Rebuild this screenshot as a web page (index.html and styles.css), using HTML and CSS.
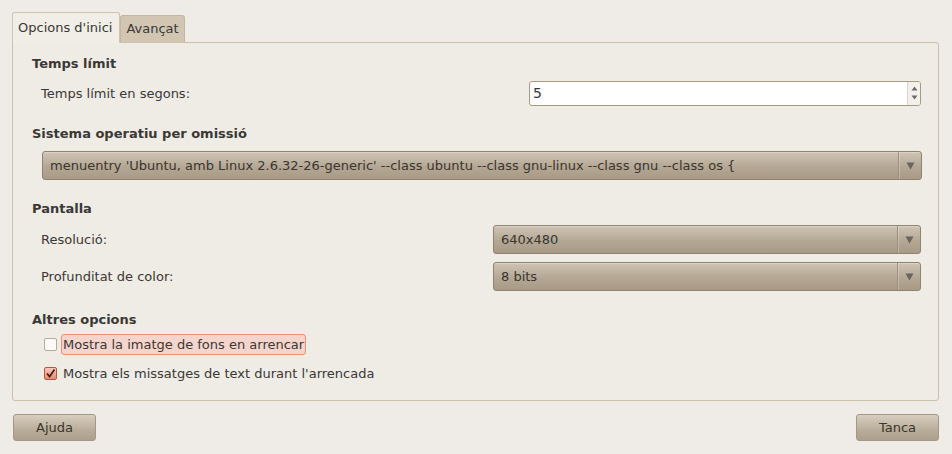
FILE: index.html
```html
<!DOCTYPE html>
<html lang="ca">
<head>
<meta charset="utf-8">
<link rel="stylesheet" href="styles.css">
</head>
<body>
<div class="dialog">
  <div class="tabs">
    <div class="tab active">Opcions d'inici</div>
    <div class="tab">Avançat</div>
  </div>
  <div class="panel">
    <div class="section s1">
      <div class="heading">Temps límit</div>
      <div class="row">
        <span class="label">Temps límit en segons:</span>
        <div class="spin">
          <span class="spin-value">5</span>
          <div class="spin-btns">
            <svg width="7" height="5" viewBox="0 0 7 5"><path d="M3.5 0.5 L6.5 4.5 L0.5 4.5Z" fill="#6f6a62"/></svg>
            <svg width="7" height="5" viewBox="0 0 7 5"><path d="M0.5 0.5 L6.5 0.5 L3.5 4.5Z" fill="#6f6a62"/></svg>
          </div>
        </div>
      </div>
    </div>
    <div class="section s2">
      <div class="heading">Sistema operatiu per omissió</div>
      <div class="combo wide">
        <span class="combo-text">menuentry 'Ubuntu, amb Linux 2.6.32-26-generic' --class ubuntu --class gnu-linux --class gnu --class os {</span>
        <span class="combo-arrow"><svg width="9" height="8" viewBox="0 0 9 8"><path d="M0.5 0.5 L8.5 0.5 L4.5 7.5Z" fill="#6a645b"/></svg></span>
      </div>
    </div>
    <div class="section s3">
      <div class="heading">Pantalla</div>
      <div class="row">
        <span class="label">Resolució:</span>
        <div class="combo half">
          <span class="combo-text">640x480</span>
          <span class="combo-arrow"><svg width="9" height="8" viewBox="0 0 9 8"><path d="M0.5 0.5 L8.5 0.5 L4.5 7.5Z" fill="#6a645b"/></svg></span>
        </div>
      </div>
      <div class="row">
        <span class="label">Profunditat de color:</span>
        <div class="combo half">
          <span class="combo-text">8 bits</span>
          <span class="combo-arrow"><svg width="9" height="8" viewBox="0 0 9 8"><path d="M0.5 0.5 L8.5 0.5 L4.5 7.5Z" fill="#6a645b"/></svg></span>
        </div>
      </div>
    </div>
    <div class="section s4">
      <div class="heading">Altres opcions</div>
      <div class="check">
        <span class="box"></span>
        <span class="check-label focus">Mostra la imatge de fons en arrencar</span>
      </div>
      <div class="check">
        <span class="box checked"><svg width="11" height="11" viewBox="0 0 11 11"><path d="M2 5.5 L4.6 8.5 L9.5 1.5" fill="none" stroke="#4a1a12" stroke-width="1.7"/></svg></span>
        <span class="check-label">Mostra els missatges de text durant l'arrencada</span>
      </div>
    </div>
  </div>
  <div class="buttons">
    <button class="btn">Ajuda</button>
    <button class="btn">Tanca</button>
  </div>
</div>
</body>
</html>
```
FILE: styles.css
```css
html, body {
  margin: 0;
  padding: 0;
  background: #efebe6;
}
body {
  font-family: "DejaVu Sans", sans-serif;
  font-size: 13px;
  color: #3a3835;
  width: 952px;
  height: 454px;
  overflow: hidden;
}
.dialog {
  padding: 12px 13px 0 12px;
}
.tabs {
  display: flex;
  align-items: flex-end;
  height: 30px;
  position: relative;
  z-index: 1;
}
.tab {
  box-sizing: border-box;
  height: 27px;
  padding: 0 5px;
  line-height: 26px;
  background: #d2c6b3;
  border: 1px solid #c4b7a1;
  border-bottom: none;
  border-radius: 3px 3px 0 0;
}
.tab.active {
  height: 31px;
  line-height: 30px;
  background: #f1ede7;
  border-color: #cfc3b0;
  margin-bottom: -1px;
  padding: 0 7px 0 5px;
}
.panel {
  box-sizing: border-box;
  height: 359px;
  border: 1px solid #cdbfa9;
  border-radius: 0 3px 3px 3px;
  background: #efebe5;
  padding: 12px 17px 0 19px;
}
.heading {
  font-weight: bold;
  height: 18px;
  line-height: 18px;
}
.s1 .heading { margin-bottom: 6px; }
.s2 { margin-top: 18px; }
.s2 .heading { margin-bottom: 8px; }
.s3 { margin-top: 20px; }
.s3 .heading { margin-bottom: 7px; }
.s4 { margin-top: 20px; }
.s4 .heading { margin-bottom: 5px; }
.row {
  display: flex;
  align-items: center;
  justify-content: space-between;
  padding-left: 9px;
  height: 29px;
}
.s1 .row { height: 28px; }
.s3 .row + .row {
  margin-top: 8px;
}
.spin {
  box-sizing: border-box;
  width: 392px;
  height: 25px;
  background: #fff;
  border: 1px solid #a69a85;
  border-radius: 3px;
  display: flex;
  align-items: center;
  justify-content: space-between;
  padding-left: 3px;
}
.spin-value {
  font-size: 14px;
}
.spin-btns {
  display: flex;
  flex-direction: column;
  justify-content: center;
  gap: 4px;
  width: 13px;
  height: 100%;
  box-sizing: border-box;
  border-left: 1px solid #ddd6cc;
  align-items: center;
  background: #f4f1ed;
  border-radius: 0 2px 2px 0;
}
.spin-btns svg { display: block; }
.combo {
  box-sizing: border-box;
  height: 29px;
  border: 1px solid #8e8270;
  border-radius: 3px;
  background: linear-gradient(#cfc4b4, #b4a794 55%, #a89a86);
  display: flex;
  align-items: center;
  box-shadow: inset 0 1px 0 rgba(255,255,255,0.25);
}
.combo.wide {
  width: 880px;
  margin-left: 10px;
}
.combo.half {
  width: 428px;
}
.combo-text {
  flex: 1;
  padding-left: 7px;
  white-space: nowrap;
  overflow: hidden;
  color: #3a352e;
}
.combo-arrow {
  width: 22px;
  height: 100%;
  border-left: 1px solid #9c907d;
  box-shadow: inset 1px 0 0 rgba(255,255,255,0.25);
  display: flex;
  align-items: center;
  justify-content: center;
}
.combo-arrow svg { display: block; }
.check {
  display: flex;
  align-items: center;
  padding-left: 12px;
  height: 21px;
}
.check + .check {
  margin-top: 8px;
}
.box {
  box-sizing: border-box;
  width: 13px;
  height: 13px;
  border: 1px solid #b5ab9c;
  border-radius: 2px;
  background: #fbfaf8;
  margin-right: 4px;
  display: flex;
  align-items: center;
  justify-content: center;
}
.box.checked {
  background: linear-gradient(#f3c9bd, #e58a72);
  border-color: #c2533b;
  margin-right: 4px;
}
.box svg { display: block; }
.check-label {
  box-sizing: border-box;
  height: 21px;
  line-height: 19px;
  padding: 0 1px;
  border: 1px solid transparent;
}
.check-label.focus {
  background: #f5d5cb;
  border: 1px solid #eb8f77;
  border-radius: 3px;
}
.buttons {
  display: flex;
  justify-content: space-between;
  margin-top: 13px;
  padding-left: 1px;
}
.btn {
  box-sizing: border-box;
  width: 83px;
  height: 27px;
  font-family: "DejaVu Sans", sans-serif;
  font-size: 13px;
  color: #3a352e;
  border: 1px solid #a59985;
  border-radius: 3px;
  background: linear-gradient(#d8cebf, #b9ad9a 60%, #ad9f8b);
  padding: 0;
}
```
